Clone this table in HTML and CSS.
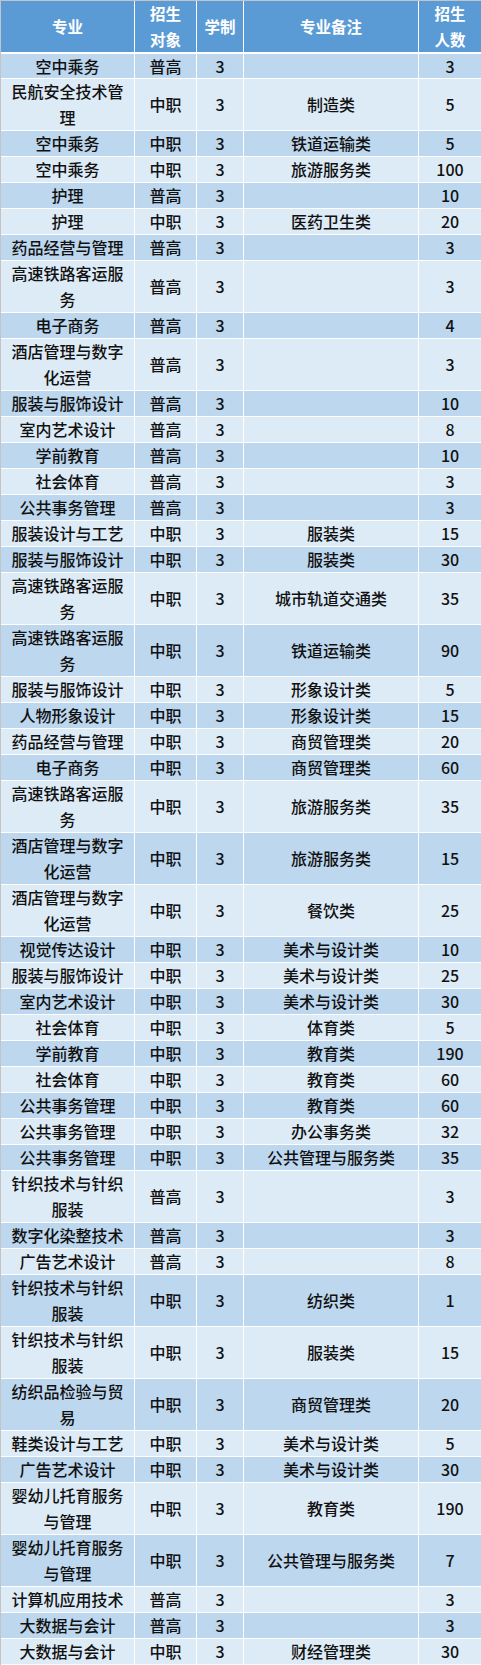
FILE: index.html
```html
<!DOCTYPE html>
<html lang="zh-CN">
<head>
<meta charset="utf-8">
<title>招生计划</title>
<link rel="stylesheet" href="styles.css">
</head>
<body>
<div class="wrap">
<table class="plan">
<colgroup>
<col class="c1"><col class="c2"><col class="c3"><col class="c4"><col class="c5">
</colgroup>
<thead>
<tr><th>专业</th><th>招生<br>对象</th><th>学制</th><th>专业备注</th><th>招生<br>人数</th></tr>
</thead>
<tbody>
<tr class="first"><td>空中乘务</td><td>普高</td><td>3</td><td></td><td>3</td></tr>
<tr class="two"><td>民航安全技术管理</td><td>中职</td><td>3</td><td>制造类</td><td>5</td></tr>
<tr><td>空中乘务</td><td>中职</td><td>3</td><td>铁道运输类</td><td>5</td></tr>
<tr><td>空中乘务</td><td>中职</td><td>3</td><td>旅游服务类</td><td>100</td></tr>
<tr><td>护理</td><td>普高</td><td>3</td><td></td><td>10</td></tr>
<tr><td>护理</td><td>中职</td><td>3</td><td>医药卫生类</td><td>20</td></tr>
<tr><td>药品经营与管理</td><td>普高</td><td>3</td><td></td><td>3</td></tr>
<tr class="two"><td>高速铁路客运服务</td><td>普高</td><td>3</td><td></td><td>3</td></tr>
<tr><td>电子商务</td><td>普高</td><td>3</td><td></td><td>4</td></tr>
<tr class="two"><td>酒店管理与数字化运营</td><td>普高</td><td>3</td><td></td><td>3</td></tr>
<tr><td>服装与服饰设计</td><td>普高</td><td>3</td><td></td><td>10</td></tr>
<tr><td>室内艺术设计</td><td>普高</td><td>3</td><td></td><td>8</td></tr>
<tr><td>学前教育</td><td>普高</td><td>3</td><td></td><td>10</td></tr>
<tr><td>社会体育</td><td>普高</td><td>3</td><td></td><td>3</td></tr>
<tr><td>公共事务管理</td><td>普高</td><td>3</td><td></td><td>3</td></tr>
<tr><td>服装设计与工艺</td><td>中职</td><td>3</td><td>服装类</td><td>15</td></tr>
<tr><td>服装与服饰设计</td><td>中职</td><td>3</td><td>服装类</td><td>30</td></tr>
<tr class="two"><td>高速铁路客运服务</td><td>中职</td><td>3</td><td>城市轨道交通类</td><td>35</td></tr>
<tr class="two"><td>高速铁路客运服务</td><td>中职</td><td>3</td><td>铁道运输类</td><td>90</td></tr>
<tr><td>服装与服饰设计</td><td>中职</td><td>3</td><td>形象设计类</td><td>5</td></tr>
<tr><td>人物形象设计</td><td>中职</td><td>3</td><td>形象设计类</td><td>15</td></tr>
<tr><td>药品经营与管理</td><td>中职</td><td>3</td><td>商贸管理类</td><td>20</td></tr>
<tr><td>电子商务</td><td>中职</td><td>3</td><td>商贸管理类</td><td>60</td></tr>
<tr class="two"><td>高速铁路客运服务</td><td>中职</td><td>3</td><td>旅游服务类</td><td>35</td></tr>
<tr class="two"><td>酒店管理与数字化运营</td><td>中职</td><td>3</td><td>旅游服务类</td><td>15</td></tr>
<tr class="two"><td>酒店管理与数字化运营</td><td>中职</td><td>3</td><td>餐饮类</td><td>25</td></tr>
<tr><td>视觉传达设计</td><td>中职</td><td>3</td><td>美术与设计类</td><td>10</td></tr>
<tr><td>服装与服饰设计</td><td>中职</td><td>3</td><td>美术与设计类</td><td>25</td></tr>
<tr><td>室内艺术设计</td><td>中职</td><td>3</td><td>美术与设计类</td><td>30</td></tr>
<tr><td>社会体育</td><td>中职</td><td>3</td><td>体育类</td><td>5</td></tr>
<tr><td>学前教育</td><td>中职</td><td>3</td><td>教育类</td><td>190</td></tr>
<tr><td>社会体育</td><td>中职</td><td>3</td><td>教育类</td><td>60</td></tr>
<tr><td>公共事务管理</td><td>中职</td><td>3</td><td>教育类</td><td>60</td></tr>
<tr><td>公共事务管理</td><td>中职</td><td>3</td><td>办公事务类</td><td>32</td></tr>
<tr><td>公共事务管理</td><td>中职</td><td>3</td><td>公共管理与服务类</td><td>35</td></tr>
<tr class="two"><td>针织技术与针织服装</td><td>普高</td><td>3</td><td></td><td>3</td></tr>
<tr><td>数字化染整技术</td><td>普高</td><td>3</td><td></td><td>3</td></tr>
<tr><td>广告艺术设计</td><td>普高</td><td>3</td><td></td><td>8</td></tr>
<tr class="two"><td>针织技术与针织服装</td><td>中职</td><td>3</td><td>纺织类</td><td>1</td></tr>
<tr class="two"><td>针织技术与针织服装</td><td>中职</td><td>3</td><td>服装类</td><td>15</td></tr>
<tr class="two"><td>纺织品检验与贸易</td><td>中职</td><td>3</td><td>商贸管理类</td><td>20</td></tr>
<tr><td>鞋类设计与工艺</td><td>中职</td><td>3</td><td>美术与设计类</td><td>5</td></tr>
<tr><td>广告艺术设计</td><td>中职</td><td>3</td><td>美术与设计类</td><td>30</td></tr>
<tr class="two"><td>婴幼儿托育服务与管理</td><td>中职</td><td>3</td><td>教育类</td><td>190</td></tr>
<tr class="two"><td>婴幼儿托育服务与管理</td><td>中职</td><td>3</td><td>公共管理与服务类</td><td>7</td></tr>
<tr><td>计算机应用技术</td><td>普高</td><td>3</td><td></td><td>3</td></tr>
<tr><td>大数据与会计</td><td>普高</td><td>3</td><td></td><td>3</td></tr>
<tr><td>大数据与会计</td><td>中职</td><td>3</td><td>财经管理类</td><td>30</td></tr>
</tbody>
</table>
</div>
</body>
</html>
```

FILE: styles.css
```css
html, body {
  margin: 0;
  padding: 0;
  background: #ffffff;
}

.wrap {
  width: 480px;
  border-left: 1px solid #c4c4c4;
  border-top: 1px solid #c4c4c4;
}

.plan {
  width: 480px;
  table-layout: fixed;
  border-collapse: separate;
  border-spacing: 0;
  font-family: "Noto Sans CJK SC", "Noto Sans", sans-serif;
  font-size: 16px;
  color: #111111;
}

.c1 { width: 134px; }
.c2 { width: 62px; }
.c3 { width: 47px; }
.c4 { width: 175px; }
.c5 { width: 62px; }

.plan th,
.plan td {
  padding: 0 6px;
  text-align: center;
  vertical-align: middle;
  border-right: 1px solid #ffffff;
  border-bottom: 1px solid #ffffff;
  overflow: hidden;
}

.plan th {
  background: #5b9bd5;
  color: #ffffff;
  font-weight: 700;
  font-size: 15.5px;
  height: 51px;
  line-height: 25.5px;
  border-bottom-width: 2px;
}

.plan td {
  height: 25px;
  line-height: 25px;
  font-weight: 500;
}

.plan tr.first td {
  height: 24px;
  line-height: 24px;
}

.plan tr.two td {
  height: 51px;
  line-height: 25.5px;
}

.plan tbody tr:nth-child(odd) td {
  background: #bdd7ee;
}

.plan tbody tr:nth-child(even) td {
  background: #ddebf7;
}

.plan th:last-child,
.plan td:last-child {
  border-right: 0;
}
```
